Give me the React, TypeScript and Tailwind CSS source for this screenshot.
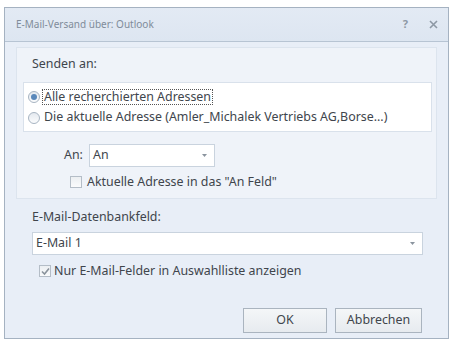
import React from "react";

function Radio({ checked }: { checked?: boolean }) {
  return (
    <span className="relative inline-block w-[12px] h-[12px] rounded-full border border-[#a7b4c2] bg-gradient-to-b from-[#e4e9ef] to-[#fbfcfd] shrink-0">
      {checked && (
        <span className="absolute left-[2px] top-[2px] w-[6px] h-[6px] rounded-full bg-[#5a88ba]" />
      )}
    </span>
  );
}

function Check({ checked }: { checked?: boolean }) {
  return (
    <span className="relative inline-flex items-center justify-center w-[12px] h-[12px] border border-[#b4bdc7] bg-gradient-to-b from-[#eceff2] to-[#fafbfc] shrink-0">
      {checked && (
        <svg width="9" height="9" viewBox="0 0 9 9">
          <path d="M1 4.5 L3.5 7 L8 1.5" fill="none" stroke="#8a939c" strokeWidth="1.6" />
        </svg>
      )}
    </span>
  );
}

function Arrow() {
  return (
    <svg width="5" height="3" viewBox="0 0 5 3">
      <path d="M0 0 H5 L2.5 3 Z" fill="#8a949e" />
    </svg>
  );
}

export default function App() {
  return (
    <div
      className="w-[454px] h-[339px] bg-white pt-[7px] pl-[4px] text-[12.4px] text-[#40454c]"
      style={{ fontFamily: '"Noto Sans", "Open Sans", sans-serif' }}
    >
      <div className="w-[445px] h-[332px] border border-[#a5b2c1] bg-[#e8eef7] flex flex-col">
        <div className="h-[34px] shrink-0 flex items-center justify-between pl-[11px] pr-[10px] border-b border-[#b7c4d3] bg-gradient-to-b from-[#e3eaf4] to-[#dde6f1]">
          <span className="text-[#7f8c9a] text-[10px]">E-Mail-Versand über: Outlook</span>
          <div className="flex items-center gap-[21px] text-[#8d98a4]">
            <span className="text-[11px] font-bold">?</span>
            <svg width="9" height="9" viewBox="0 0 9 9">
              <path d="M1 1 L8 8 M8 1 L1 8" stroke="#8d98a4" strokeWidth="1.6" />
            </svg>
          </div>
        </div>
        <div className="flex-1 flex flex-col px-[11px] pt-[5px]">
          <div className="border border-[#dce4ee] bg-[#eff3f9] pl-[6px] pr-[4px] pt-[6px] pb-[6px]">
            <div className="pl-[9px] h-[20px] leading-[20px]">Senden an:</div>
            <div className="mt-[8px] bg-white border border-[#d9e1eb] pl-[4px] py-[5px] flex flex-col gap-[4px]">
              <div className="flex items-center gap-[2px] h-[17px]">
                <Radio checked />
                <span className="border border-dotted border-[#555] px-[1px] leading-[14px]">
                  Alle recherchierten Adressen
                </span>
              </div>
              <div className="flex items-center gap-[4px] h-[17px]">
                <Radio />
                <span>Die aktuelle Adresse (Amler_Michalek Vertriebs AG,Borse...)</span>
              </div>
            </div>
            <div className="mt-[12px] flex items-center pl-[41px] h-[23px]">
              <span className="w-[25px]">An:</span>
              <div className="w-[126px] h-[23px] bg-white border border-[#c9d3de] flex items-center justify-between pl-[3px] pr-[7px]">
                <span>An</span>
                <Arrow />
              </div>
            </div>
            <div className="mt-[5px] flex items-center gap-[5px] pl-[47px] h-[20px]">
              <Check />
              <span>Aktuelle Adresse in das "An Feld"</span>
            </div>
          </div>
          <div className="mt-[6px] px-[16px] pt-[2px] pb-[6px] mr-[6px]">
            <div className="h-[20px] leading-[20px]">E-Mail-Datenbankfeld:</div>
            <div className="mt-[5px] w-[391px] h-[23px] bg-white border border-[#c9d3de] flex items-center justify-between pl-[3px] pr-[7px]">
              <span>E-Mail 1</span>
              <Arrow />
            </div>
            <div className="mt-[7px] flex items-center gap-[3px] pl-[7px] h-[18px]">
              <Check checked />
              <span>Nur E-Mail-Felder in Auswahlliste anzeigen</span>
            </div>
          </div>
          <div className="mt-auto mb-[5px] flex justify-end gap-[8px] pr-[15px]">
            <button className="w-[84px] h-[25px] border border-[#aab4bf] bg-gradient-to-b from-[#f4f6f8] to-[#e7ebef] text-[#40454c]">
              OK
            </button>
            <button className="w-[87px] h-[25px] border border-[#aab4bf] bg-gradient-to-b from-[#f4f6f8] to-[#e7ebef] text-[#40454c]">
              Abbrechen
            </button>
          </div>
        </div>
      </div>
    </div>
  );
}
